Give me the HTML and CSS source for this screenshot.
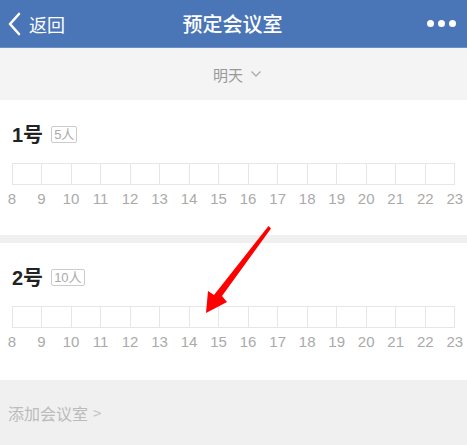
FILE: index.html
```html
<!DOCTYPE html>
<html lang="zh">
<head>
	<meta charset="UTF-8">
	<title>预定会议室</title>
	<link rel="stylesheet" href="styles.css">
</head>
<body>
	<!--顶部导航-->
	<div class="header">
		<div class="back">
			<svg width="14" height="24" viewBox="0 0 14 24"><path d="M12 2 L3 12 L12 22" fill="none" stroke="#fff" stroke-width="2.6" stroke-linecap="round" stroke-linejoin="round"/></svg>
			<span>返回</span>
		</div>
		<div class="title">预定会议室</div>
		<div class="more"><i></i><i></i><i></i></div>
	</div>

	<!--日期选择-->
	<div class="date">
		<span>明天</span>
		<svg width="12" height="8" viewBox="0 0 12 8"><path d="M1.5 1.5 L6 6 L10.5 1.5" fill="none" stroke="#aaa" stroke-width="1.3"/></svg>
	</div>

	<!--会议室列表-->
	<div class="room">
		<div class="name">1号 <span class="tag">5人</span></div>
		<div class="grid">
			<i></i><i></i><i></i><i></i><i></i><i></i><i></i><i></i><i></i><i></i><i></i><i></i><i></i><i></i><i></i>
		</div>
		<div class="hours">
			<span>8</span><span>9</span><span>10</span><span>11</span><span>12</span><span>13</span><span>14</span><span>15</span><span>16</span><span>17</span><span>18</span><span>19</span><span>20</span><span>21</span><span>22</span><span>23</span>
		</div>
	</div>
	<div class="room room2">
		<div class="name">2号 <span class="tag">10人</span></div>
		<div class="grid">
			<i></i><i></i><i></i><i></i><i></i><i></i><i></i><i></i><i></i><i></i><i></i><i></i><i></i><i></i><i></i>
		</div>
		<div class="hours">
			<span>8</span><span>9</span><span>10</span><span>11</span><span>12</span><span>13</span><span>14</span><span>15</span><span>16</span><span>17</span><span>18</span><span>19</span><span>20</span><span>21</span><span>22</span><span>23</span>
		</div>
	</div>

	<!--添加-->
	<div class="add">添加会议室 <span class="arr">&gt;</span></div>

	<!--红色箭头标注-->
	<svg class="mark" width="467" height="445" viewBox="0 0 467 445">
		<path d="M268.5 226 L271 228.5 L222 296 L227 302 L206 313 L208 291 L214 295 Z" fill="#f00"/>
	</svg>
</body>
</html>
```

FILE: styles.css
```css
*{
	margin:0;
	padding:0;
}
body{
	width:467px;
	height:445px;
	overflow:hidden;
	background:#f0f0f0;
	font-family:"Liberation Sans","Noto Sans CJK SC",sans-serif;
	position:relative;
}

.header{
	height:47px;
	background:#4a76b7;
	border-bottom:1px solid #6a8fc6;
	display:flex;
	align-items:center;
	justify-content:space-between;
	color:#fff;
	padding:0 10px 0 7px;
}
.back{
	display:flex;
	align-items:center;
	width:80px;
	font-size:18px;
	font-family:"Noto Sans CJK SC",sans-serif;
}
.back svg{
	margin-right:8px;
}
.title{
	font-size:20px;
	font-family:"Noto Sans CJK SC",sans-serif;
	font-weight:500;
	margin-left:2px;
}
.more{
	width:80px;
	display:flex;
	justify-content:flex-end;
	gap:4px;
	margin-right:1px;
}
.more i{
	width:7px;
	height:7px;
	border-radius:50%;
	background:#fff;
}

.date{
	height:52px;
	background:#f4f4f4;
	display:flex;
	align-items:center;
	justify-content:center;
	gap:7px;
	color:#999;
	font-size:15px;
	font-family:"Noto Sans CJK SC",sans-serif;
	padding-left:8px;
}

.room{
	background:#fff;
	height:135px;
	padding:0 12px;
	box-sizing:border-box;
	padding-top:21px;
}
.room2{
	margin-top:8px;
	height:137px;
}
.name{
	font-size:20px;
	font-weight:bold;
	color:#222;
	display:flex;
	align-items:center;
	height:24px;
}
.tag{
	font-size:13px;
	font-weight:normal;
	color:#aaa;
	border:1px solid #ccc;
	border-radius:2px;
	padding:0 2px;
	line-height:15px;
	margin-left:8px;
	margin-top:2px;
	font-family:"Liberation Sans","Noto Sans CJK SC",sans-serif;
}
.grid{
	margin-top:18px;
	height:22px;
	width:443px;
	border:1px solid #e6e6e6;
	box-sizing:border-box;
	display:flex;
}
.grid i{
	flex:1;
	border-left:1px solid #e6e6e6;
}
.grid i:first-child{
	border-left:none;
}
.hours{
	display:flex;
	margin-left:-14.75px;
	margin-top:5px;
}
.hours span{
	flex-shrink:0;
	width:29.53px;
	text-align:center;
	font-size:15px;
	color:#aaa;
	line-height:18px;
}

.add{
	height:65px;
	display:flex;
	align-items:center;
	padding-left:8px;
	font-size:16px;
	color:#bbb;
	font-family:"Noto Sans CJK SC",sans-serif;
}
.add .arr{
	margin-left:5px;
	font-size:15px;
	color:#c4c4c4;
}

.mark{
	position:absolute;
	left:0;
	top:0;
	pointer-events:none;
}
```
